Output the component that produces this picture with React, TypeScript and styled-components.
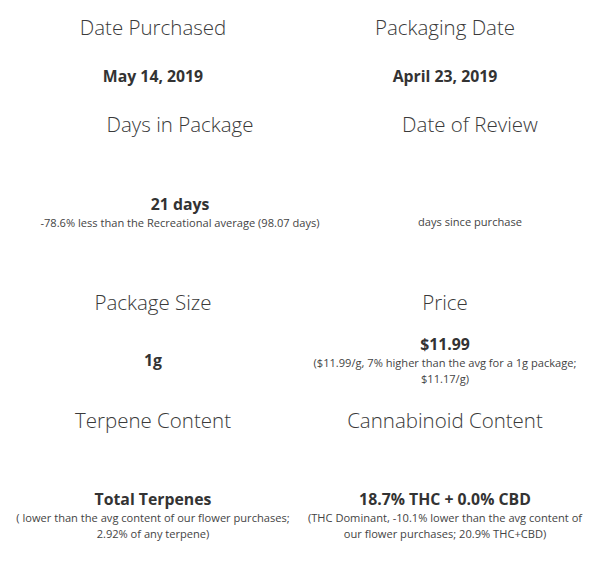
import React from 'react'
import styled, { createGlobalStyle } from 'styled-components'

const GlobalStyle = createGlobalStyle`
    html, body {
        margin: 0;
        padding: 0;
        background: #ffffff;
    }
    body {
        font-family: 'Open Sans', Lato, 'Liberation Sans', sans-serif;
        color: #333333;
    }
`

const Page = styled.main`
    width: 594px;
    display: flex;
    flex-direction: column;
`

const Row = styled.section<{ $pt: number; $shift?: boolean }>`
    display: grid;
    padding-top: ${(p) => p.$pt}px;
    padding-left: ${(p) => (p.$shift ? 54 : 0)}px;
    grid-template-columns: ${(p) => (p.$shift ? '252px 244px' : '306px 278px')};
    column-gap: ${(p) => (p.$shift ? '42px' : '0px')};
`

const Cell = styled.div`
    display: flex;
    flex-direction: column;
    align-items: center;
`

const Title = styled.h2`
    margin: 0;
    height: 50px;
    display: flex;
    align-items: center;
    justify-content: center;
    font-size: 20.5px;
    font-weight: 300;
    color: #3a3a3a;
    white-space: nowrap;
`

const Body = styled.div<{ $h: number }>`
    height: ${(p) => p.$h}px;
    display: flex;
    flex-direction: column;
    align-items: center;
    justify-content: center;
    text-align: center;
`

const Value = styled.div`
    font-size: 15.8px;
    font-weight: 700;
    line-height: 22px;
    color: #333333;
    white-space: nowrap;
`

const Note = styled.div<{ $offset?: number }>`
    font-size: 11.1px;
    line-height: 16px;
    color: #444444;
    white-space: nowrap;
    margin-top: ${(p) => p.$offset ?? 0}px;
`

type Item = {
    title: string
    value?: string
    note?: React.ReactNode
    noteOffset?: number
}

const Tile = ({ item, h }: { item: Item; h: number }) => (
    <Cell>
        <Title>{item.title}</Title>
        <Body $h={h}>
            {item.value && <Value>{item.value}</Value>}
            {item.note && <Note $offset={item.noteOffset}>{item.note}</Note>}
        </Body>
    </Cell>
)

const App = () => (
    <>
        <GlobalStyle />
        <Page>
            <Row $pt={2}>
                <Tile h={47} item={{ title: 'Date Purchased', value: 'May 14, 2019' }} />
                <Tile h={47} item={{ title: 'Packaging Date', value: 'April 23, 2019' }} />
            </Row>
            <Row $pt={0} $shift>
                <Tile
                    h={126}
                    item={{
                        title: 'Days in Package',
                        value: '21 days',
                        note: '-78.6% less than the Recreational average (98.07 days)',
                    }}
                />
                <Tile h={126} item={{ title: 'Date of Review', note: 'days since purchase', noteOffset: 20 }} />
            </Row>
            <Row $pt={2}>
                <Tile h={66} item={{ title: 'Package Size', value: '1g' }} />
                <Tile
                    h={66}
                    item={{
                        title: 'Price',
                        value: '$11.99',
                        note: (
                            <>
                                ($11.99/g, 7% higher than the avg for a 1g package;
                                <br />
                                $11.17/g)
                            </>
                        ),
                    }}
                />
            </Row>
            <Row $pt={2}>
                <Tile
                    h={140}
                    item={{
                        title: 'Terpene Content',
                        value: 'Total Terpenes',
                        note: (
                            <>
                                ( lower than the avg content of our flower purchases;
                                <br />
                                2.92% of any terpene)
                            </>
                        ),
                    }}
                />
                <Tile
                    h={140}
                    item={{
                        title: 'Cannabinoid Content',
                        value: '18.7% THC + 0.0% CBD',
                        note: (
                            <>
                                (THC Dominant, -10.1% lower than the avg content of
                                <br />
                                our flower purchases; 20.9% THC+CBD)
                            </>
                        ),
                    }}
                />
            </Row>
        </Page>
    </>
)

export default App
